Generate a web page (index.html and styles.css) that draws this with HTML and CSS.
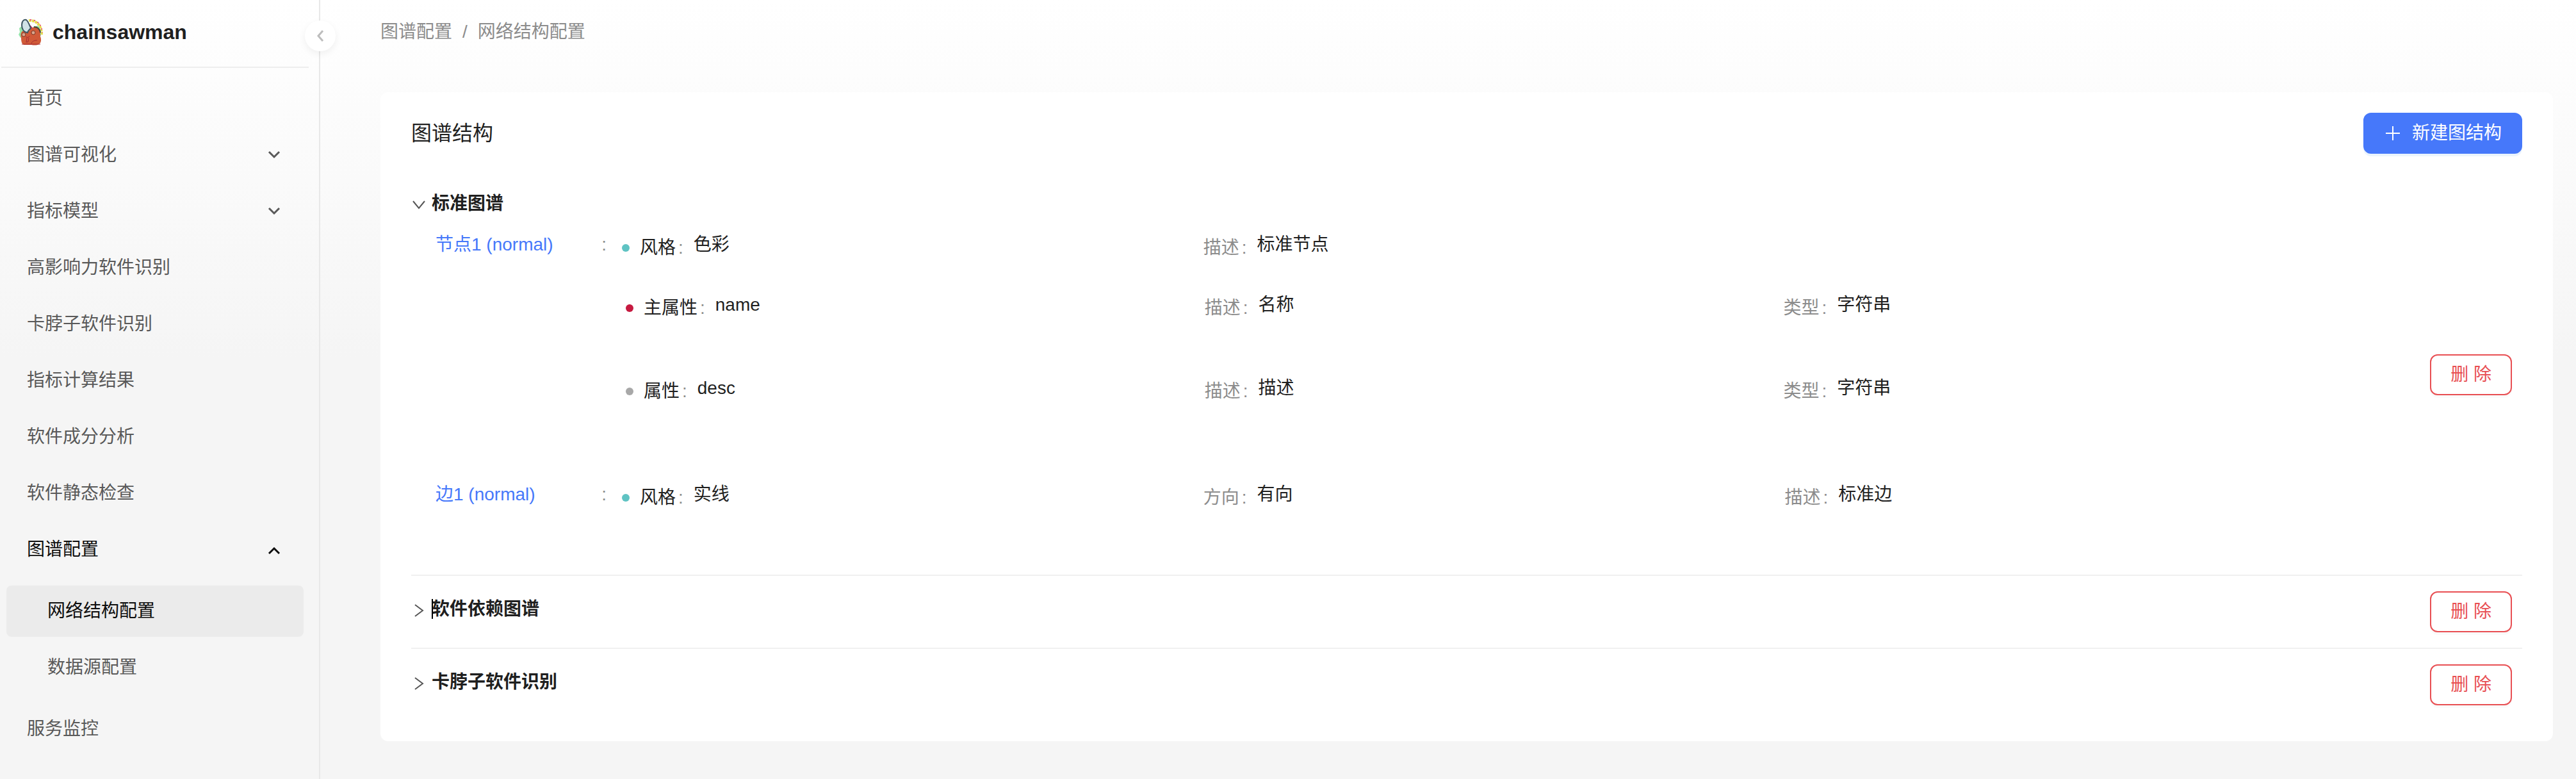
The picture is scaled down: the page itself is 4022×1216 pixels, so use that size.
FILE: index.html
```html
<!DOCTYPE html>
<html lang="zh-CN">
<head>
  <meta charset="utf-8">
  <title>网络结构配置 - chainsawman</title>
  <link rel="stylesheet" href="styles.css">
</head>
<body>
  <svg class="sprite" aria-hidden="true">
    <symbol id="chevron" viewBox="0 0 28 28"><path d="M6 9l8 8 8-8" fill="none" stroke="currentColor" stroke-width="3"/></symbol>
    <symbol id="chevron-up" viewBox="0 0 28 28"><path d="M6 20l8-8 8 8" fill="none" stroke="currentColor" stroke-width="3"/></symbol>
    <symbol id="arrow" viewBox="0 0 24 24"><path d="M3 6l9 11 9-11" fill="none" stroke="currentColor" stroke-width="2"/></symbol>
    <symbol id="arrow-right" viewBox="0 0 24 24"><path d="M6 3l12 9-12 9" fill="none" stroke="currentColor" stroke-width="2"/></symbol>
  </svg>
  <div class="layout">
    <aside class="sidebar">
      <div class="brand">
        <svg class="brand-logo" viewBox="0 0 40 44" aria-hidden="true">
          <path d="M17 4c12-1 20 8 20 22" fill="none" stroke="#e6dc4a" stroke-width="4" stroke-dasharray="4 1"/>
          <path d="M19 3c11 0 18 7 19 20" fill="none" stroke="#e8567a" stroke-width="2" stroke-dasharray="2 4"/>
          <path d="M2 16l5-4 3 8v8l-6 3-3-5 2-4zM23 14l9-2 4 8v8l-5-3z" fill="#93e3a8"/>
          <path d="M16 9l4 3 4 5-5 3z" fill="#c81a5c"/>
          <path d="M5 31c-2-7 1-12 7-11 3 0 4 1 6 0 2-5 7-7 12-5 5 3 5 9 5 14 2 5 1 9-1 11-3 3-8 3-13 2H10c-4-1-5-5-5-11z" fill="#d05a38"/>
          <path d="M6 11c0-6 3-9 7-8 3 2 5 8 7 13-2 2-4 3-5 7-6-1-9-6-9-12z" fill="#d0e2e6" stroke="#3d5560" stroke-width="2"/>
          <path d="M25 14c5 0 9 3 10 9" fill="none" stroke="#4a4038" stroke-width="2"/>
          <circle cx="24" cy="23" r="3" fill="#d9a58c" stroke="#7b3a28" stroke-width="1"/>
          <circle cx="9" cy="26" r="3" fill="#d9a58c" stroke="#7b3a28" stroke-width="1"/>
          <path d="M12 29c2 2 5 2 6-1M14 31l-1 7 3-1 1-6M21 40c1-4 5-5 9-5M6 41h29" fill="none" stroke="#a52a33" stroke-width="1"/>
        </svg>
        <span class="brand-name">chainsawman</span>
      </div>
      <button class="collapse" type="button" aria-label="收起菜单">
        <svg width="28" height="28" viewBox="0 0 28 28"><path d="M18 6l-7 8 7 8" fill="none" stroke="#bdbdbd" stroke-width="3"/></svg>
      </button>
      <nav class="menu">
        <a class="item" href="#">首页</a>
        <a class="item" href="#">图谱可视化<svg class="caret"><use href="#chevron"/></svg></a>
        <a class="item" href="#">指标模型<svg class="caret"><use href="#chevron"/></svg></a>
        <a class="item" href="#">高影响力软件识别</a>
        <a class="item" href="#">卡脖子软件识别</a>
        <a class="item" href="#">指标计算结果</a>
        <a class="item" href="#">软件成分分析</a>
        <a class="item" href="#">软件静态检查</a>
        <a class="item open" href="#">图谱配置<svg class="caret"><use href="#chevron-up"/></svg></a>
        <div class="submenu">
          <a class="item selected" href="#" aria-current="page">网络结构配置</a>
          <a class="item" href="#">数据源配置</a>
        </div>
        <a class="item" href="#">服务监控</a>
      </nav>
    </aside>

    <main class="main">
      <nav class="breadcrumb"><a href="#">图谱配置</a><span>/</span><a href="#">网络结构配置</a></nav>

      <section class="card">
        <header class="card-head">
          <h1 class="card-title">图谱结构</h1>
          <button class="btn primary" type="button">
            <svg width="28" height="28" viewBox="0 0 28 28"><path d="M14 3v22M3 14h22" fill="none" stroke="currentColor" stroke-width="2"/></svg>
            新建图结构
          </button>
        </header>

        <article class="graph">
          <div class="graph-body">
            <h2 class="graph-title"><button class="expand" type="button" aria-expanded="true" aria-label="收起"><svg><use href="#arrow"/></svg></button>标准图谱</h2>
            <div class="detail">
              <div class="entity">
                <div class="entity-name"><a href="#">节点1 (normal)</a><span>:</span></div>
                <div class="entity-info">
                  <dl class="fields style">
                    <div class="field"><dt class="dotted teal">风格</dt><dd>色彩</dd></div>
                    <div class="field"><dt>描述</dt><dd>标准节点</dd></div>
                  </dl>
                  <dl class="fields attr">
                    <div class="field"><dt class="dotted red">主属性</dt><dd>name</dd></div>
                    <div class="field"><dt>描述</dt><dd>名称</dd></div>
                    <div class="field"><dt>类型</dt><dd>字符串</dd></div>
                  </dl>
                  <dl class="fields attr">
                    <div class="field"><dt class="dotted gray">属性</dt><dd>desc</dd></div>
                    <div class="field"><dt>描述</dt><dd>描述</dd></div>
                    <div class="field"><dt>类型</dt><dd>字符串</dd></div>
                  </dl>
                </div>
              </div>
              <div class="entity">
                <div class="entity-name"><a href="#">边1 (normal)</a><span>:</span></div>
                <div class="entity-info">
                  <dl class="fields style">
                    <div class="field"><dt class="dotted teal">风格</dt><dd>实线</dd></div>
                    <div class="field"><dt>方向</dt><dd>有向</dd></div>
                    <div class="field"><dt>描述</dt><dd>标准边</dd></div>
                  </dl>
                </div>
              </div>
            </div>
          </div>
          <button class="btn danger" type="button">删 除</button>
        </article>

        <article class="graph">
          <div class="graph-body">
            <h2 class="graph-title"><button class="expand" type="button" aria-expanded="false" aria-label="展开"><svg><use href="#arrow-right"/></svg></button><span class="with-cursor">软件依赖图谱</span></h2>
          </div>
          <button class="btn danger" type="button">删 除</button>
        </article>

        <article class="graph">
          <div class="graph-body">
            <h2 class="graph-title"><button class="expand" type="button" aria-expanded="false" aria-label="展开"><svg><use href="#arrow-right"/></svg></button>卡脖子软件识别</h2>
          </div>
          <button class="btn danger" type="button">删 除</button>
        </article>
      </section>
    </main>
  </div>
</body>
</html>
```
FILE: styles.css
```css
* {
  box-sizing: border-box;
}

body {
  margin: 0;
  color: #1f1f1f;
  font-family: "Liberation Sans", "Noto Sans CJK SC", sans-serif;
  font-size: 28px;
  line-height: 44px;
}

a {
  color: inherit;
  text-decoration: none;
}

button {
  margin: 0;
  font: inherit;
  cursor: pointer;
}

.sprite {
  position: absolute;
  width: 0;
  height: 0;
}

.layout {
  display: flex;
  min-height: 100vh;
  background: linear-gradient(#fff, #f5f5f5 46%);
}

/* Sidebar */

.sidebar {
  position: relative;
  flex: 0 0 500px;
  border-right: 2px solid #e8e8e8;
}

.brand {
  display: flex;
  align-items: center;
  gap: 14px;
  margin: 0 16px 8px 2px;
  padding: 28px 26px 32px;
  border-bottom: 2px solid #eee;
}

.brand-logo {
  width: 40px;
  height: 44px;
}

.brand-name {
  font-size: 32px;
  font-weight: 700;
}

.collapse {
  position: absolute;
  top: 32px;
  right: -26px;
  display: grid;
  place-items: center;
  width: 48px;
  height: 48px;
  padding: 0;
  border: 0;
  border-radius: 50%;
  background: #fff;
  box-shadow: 0 4px 12px rgba(0, 0, 0, 0.06);
}

.menu {
  display: grid;
  gap: 8px;
  padding: 0 24px 30px 10px;
}

.submenu {
  display: grid;
  gap: 8px;
  padding: 8px 0;
}

.item {
  display: flex;
  align-items: center;
  justify-content: space-between;
  padding: 18px 32px;
  border-radius: 8px;
  color: #595959;
}

.submenu .item {
  padding-left: 64px;
}

.item.open,
.item.selected {
  color: #0d0d0d;
}

.item.selected {
  background: #ebebeb;
}

.caret {
  width: 28px;
  height: 28px;
}

/* Main area */

.main {
  flex: 1;
  min-width: 0;
  padding: 28px 36px 58px 94px;
}

.breadcrumb {
  display: flex;
  gap: 16px;
  margin-bottom: 72px;
  color: #8c8c8c;
}

.card {
  padding: 32px 48px;
  border-radius: 12px;
  background: #fff;
}

.card-head {
  display: flex;
  align-items: center;
  justify-content: space-between;
  margin-bottom: 32px;
}

.card-title {
  margin: 0;
  font-size: 32px;
  font-weight: 400;
}

.btn {
  display: flex;
  align-items: center;
  gap: 16px;
  padding: 8px 30px;
  border: 2px solid;
  border-radius: 12px;
}

.primary {
  border-color: #4678fa;
  background: #4678fa;
  color: #fff;
  box-shadow: 0 4px 0 rgba(5, 115, 230, 0.08);
}

.danger {
  margin-right: 16px;
  border-color: #e84f53;
  background: #fff;
  color: #e84f53;
  box-shadow: 0 4px 0 rgba(0, 0, 0, 0.02);
}

/* Graph list */

.graph {
  display: flex;
  align-items: center;
  padding: 24px 0;
  border-bottom: 2px solid #f0f0f0;
}

.graph:last-child {
  border-bottom: 0;
}

.graph-body {
  flex: 1;
}

.graph-title {
  display: flex;
  align-items: center;
  gap: 8px;
  margin: 0 0 8px;
  font-size: 28px;
  font-weight: 700;
}

.expand {
  display: flex;
  padding: 4px 0 0;
  border: 0;
  background: none;
  color: #555;
}

.expand svg {
  width: 24px;
  height: 24px;
}

.with-cursor {
  position: relative;
}

.with-cursor::before {
  content: "";
  position: absolute;
  top: 6px;
  left: 0;
  width: 2px;
  height: 31px;
  background: #000;
}

.detail {
  display: grid;
  gap: 36px;
  padding: 12px 100px 29px 38px;
}

.entity {
  display: flex;
  gap: 24px;
}

.entity-name {
  display: flex;
  flex: 0 0 267px;
  justify-content: space-between;
  color: #8c8c8c;
}

.entity-name a {
  color: #4678fa;
}

.entity-info {
  flex: 1;
}

.fields {
  display: grid;
  grid-template-columns: repeat(3, 1fr);
  margin: 0;
}

.fields.style {
  padding-bottom: 40px;
}

.fields.attr {
  padding: 0 6px 76px;
}

.field {
  display: flex;
  gap: 16px;
}

.field dt {
  display: flex;
  align-items: center;
  color: #8c8c8c;
  line-height: 54px;
}

.field dt::after {
  content: ":";
  margin-left: 4px;
  color: #8c8c8c;
}

.field dd {
  margin: 0;
}

.field .dotted {
  color: #1f1f1f;
}

.dotted::before {
  content: "";
  width: 12px;
  height: 12px;
  margin-right: 16px;
  border-radius: 50%;
}

.teal::before {
  background: #5fc3c3;
}

.red::before {
  background: #c61a40;
}

.gray::before {
  background: #a8a8a8;
}
```
